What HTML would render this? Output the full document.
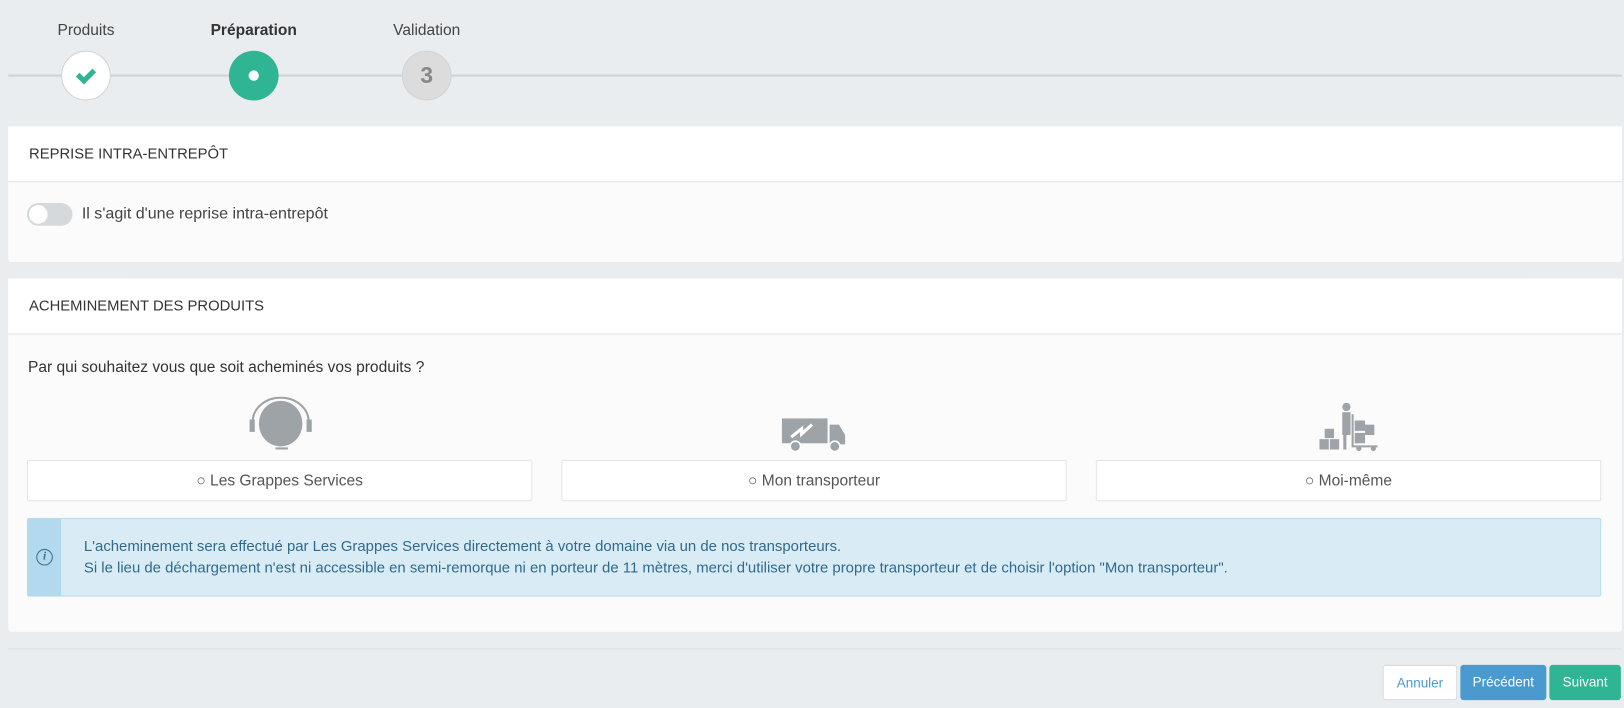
<!DOCTYPE html>
<html><head><meta charset="utf-8"><style>
*{box-sizing:border-box;margin:0;padding:0}
html,body{width:1624px;height:708px;overflow:hidden;background:#e9edf0}
#w{position:absolute;left:0;top:0;width:1568px;height:684px;transform:scale(1.0357);transform-origin:0 0;font-family:"Liberation Sans",sans-serif;color:#333}
.lbl{position:absolute;top:21px;font-size:15px;color:#444;text-align:center;width:130px}
.line{position:absolute;left:8px;width:1558px;top:72px;height:2px;background:#cfd3d6}
.circ{position:absolute;top:49px;width:48px;height:48px;border-radius:50%}
.panel{position:absolute;left:8px;width:1558px;background:#fbfbfb;border-radius:3px}
.ph{height:54px;border-bottom:1px solid #e1e4e6;background:#fff;padding:19px 20px;font-size:14.3px;color:#333}
.opt{position:absolute;top:444px;height:40px;border:1px solid #e2e4e6;background:#fff;border-radius:2px;text-align:center;line-height:40px;font-size:15px;color:#555}
.btn{position:absolute;top:642px;height:34px;border-radius:3px;font-size:13px;line-height:34px;text-align:center}
</style></head><body><div id="w">
<div class="lbl" style="left:18px">Produits</div>
<div class="lbl" style="left:180px;font-weight:bold;color:#333">Préparation</div>
<div class="lbl" style="left:347px">Validation</div>
<div class="line"></div>
<div class="circ" style="left:59px;background:#fff;border:1px solid #cfd3d6"><svg width="46" height="46" viewBox="0 0 46 46"><path d="M15 22l6 6 10-10" stroke="#2fb594" stroke-width="5" fill="none"/></svg></div>
<div class="circ" style="left:221px;background:#2fb594"><div style="position:absolute;left:19px;top:19px;width:10px;height:10px;border-radius:50%;background:#fff"></div></div>
<div class="circ" style="left:388px;background:#dcdcdc;border:1px solid #cfd3d6;text-align:center;line-height:46px;font-size:22px;font-weight:bold;color:#888">3</div>

<div class="panel" style="top:122px;height:131px">
<div class="ph">REPRISE INTRA-ENTREPÔT</div>
<div style="position:absolute;left:18px;top:74px;width:44px;height:22px;border-radius:11px;background:#d6d9db"><div style="position:absolute;left:2px;top:2px;width:18px;height:18px;border-radius:50%;background:#fff"></div></div>
<div style="position:absolute;left:71px;top:76px;font-size:15.5px;color:#444">Il s'agit d'une reprise intra-entrepôt</div>
</div>

<div class="panel" style="top:269px;height:341px">
<div class="ph">ACHEMINEMENT DES PRODUITS</div>
<div style="position:absolute;left:19px;top:77px;font-size:15px;color:#333">Par qui souhaitez vous que soit acheminés vos produits ?</div>
</div>
<svg style="position:absolute;left:240px;top:383px" width="62" height="52" viewBox="0 0 62 52"><path d="M4 30V24A27 23 0 0 1 58 24V30" stroke="#9ea3a8" stroke-width="2" fill="none"/><rect x="1" y="22" width="5" height="12" fill="#9ea3a8"/><rect x="56" y="22" width="5" height="12" fill="#9ea3a8"/><ellipse cx="31" cy="26" rx="21" ry="22" fill="#9ea3a8"/><path d="M26 50h12" stroke="#9ea3a8" stroke-width="2"/></svg>
<svg style="position:absolute;left:754px;top:402px" width="64" height="34" viewBox="0 0 64 34"><rect x="1" y="2" width="44" height="24" fill="#9ea3a8"/><path d="M47 8h9l6 10v9H47z" fill="#9ea3a8"/><path d="M10 20l10-8 0 5 10-9" stroke="#fff" stroke-width="3" fill="none"/><circle cx="14" cy="29" r="5" fill="#9ea3a8" stroke="#fff" stroke-width="1.5"/><circle cx="52" cy="29" r="5" fill="#9ea3a8" stroke="#fff" stroke-width="1.5"/></svg>
<svg style="position:absolute;left:1272px;top:388px" width="64" height="48" viewBox="0 0 64 48"><rect x="2" y="36" width="9" height="10" fill="#9ea3a8"/><rect x="12" y="36" width="9" height="10" fill="#9ea3a8"/><rect x="7" y="26" width="9" height="9" fill="#9ea3a8"/><circle cx="28" cy="5" r="4" fill="#9ea3a8"/><rect x="24" y="10" width="8" height="22" fill="#9ea3a8"/><rect x="25" y="32" width="3" height="14" fill="#9ea3a8"/><rect x="36" y="18" width="10" height="10" fill="#9ea3a8"/><rect x="46" y="22" width="9" height="10" fill="#9ea3a8"/><rect x="36" y="30" width="10" height="10" fill="#9ea3a8"/><path d="M34 12v31h24" stroke="#9ea3a8" stroke-width="2" fill="none"/><circle cx="40" cy="45" r="2.5" fill="#9ea3a8"/><circle cx="54" cy="45" r="2.5" fill="#9ea3a8"/></svg>
<div class="opt" style="left:26px;width:488px">○ Les Grappes Services</div>
<div class="opt" style="left:542px;width:488px">○ Mon transporteur</div>
<div class="opt" style="left:1058px;width:488px">○ Moi-même</div>
<div style="position:absolute;left:26px;top:500px;width:1520px;height:76px;background:#d9ecf6;border:1px solid #b8dced;border-radius:2px">
<div style="position:absolute;left:0;top:0;width:32px;height:74px;background:#b3d9ee"></div>
<div style="position:absolute;left:8px;top:29px;width:16px;height:16px;border:1.5px solid #3a6f8f;border-radius:50%;font-size:11px;font-style:italic;font-weight:bold;color:#3a6f8f;text-align:center;line-height:13px;font-family:'Liberation Serif',serif">i</div>
<div style="position:absolute;left:54px;top:17px;font-size:14.4px;color:#2f6a8c;line-height:21px;white-space:nowrap">L'acheminement sera effectué par Les Grappes Services directement à votre domaine via un de nos transporteurs.<br>Si le lieu de déchargement n'est ni accessible en semi-remorque ni en porteur de 11 mètres, merci d'utiliser votre propre transporteur et de choisir l'option "Mon transporteur".</div>
</div>
<div style="position:absolute;left:8px;top:626px;width:1558px;height:1px;background:#dde1e4"></div>
<div class="btn" style="left:1335px;width:72px;background:#fff;border:1px solid #d8dcdf;color:#4a9ad0">Annuler</div>
<div class="btn" style="left:1410px;width:83px;background:#4a9ad0;color:#fff">Précédent</div>
<div class="btn" style="left:1496px;width:69px;background:#2fb594;color:#fff">Suivant</div>
</div></body></html>
